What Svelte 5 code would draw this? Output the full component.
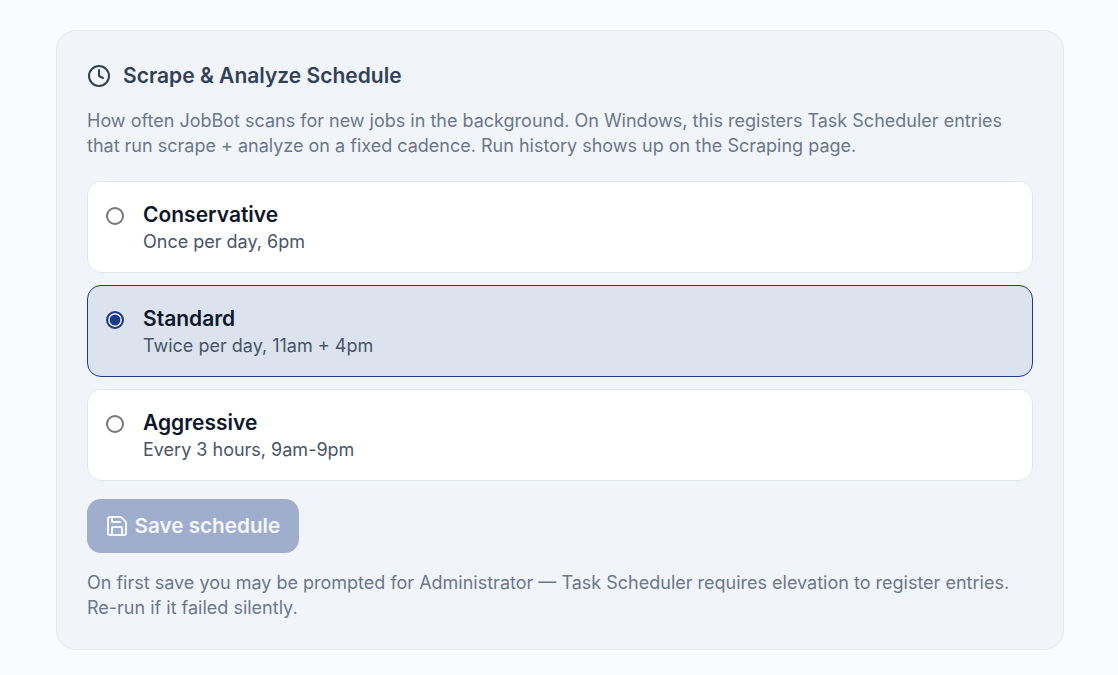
<script>
  const options = [
    { name: 'Conservative', detail: 'Once per day, 6pm' },
    { name: 'Standard', detail: 'Twice per day, 11am + 4pm' },
    { name: 'Aggressive', detail: 'Every 3 hours, 9am-9pm' }
  ];
  let selected = $state('Standard');
</script>

<main class="page">
  <section class="card">
    <h2 class="title">
      <svg class="clock" viewBox="0 0 24 24" fill="none" stroke="currentColor" stroke-width="2" stroke-linecap="round" stroke-linejoin="round">
        <circle cx="12" cy="12" r="10"></circle>
        <path d="M12 6v6l4 2"></path>
      </svg>
      Scrape &amp; Analyze Schedule
    </h2>
    <p class="note desc">How often JobBot scans for new jobs in the background. On Windows, this registers Task Scheduler entries that run scrape + analyze on a fixed cadence. Run history shows up on the Scraping page.</p>
    <div class="options">
      {#each options as o}
        <label class="option" class:active={selected === o.name}>
          <input type="radio" name="schedule" value={o.name} bind:group={selected} />
          <span class="text">
            <span class="name">{o.name}</span>
            <span class="detail">{o.detail}</span>
          </span>
        </label>
      {/each}
    </div>
    <button class="save" disabled>
      <svg class="disk" viewBox="0 0 24 24" fill="none" stroke="currentColor" stroke-width="2" stroke-linecap="round" stroke-linejoin="round">
        <path d="M15.2 3a2 2 0 0 1 1.4.6l3.8 3.8a2 2 0 0 1 .6 1.4V19a2 2 0 0 1-2 2H5a2 2 0 0 1-2-2V5a2 2 0 0 1 2-2z"></path>
        <path d="M17 21v-7a1 1 0 0 0-1-1H8a1 1 0 0 0-1 1v7"></path>
        <path d="M7 3v4a1 1 0 0 0 1 1h7"></path>
      </svg>
      <span class="save-label">Save schedule</span>
    </button>
    <p class="note foot">On first save you may be prompted for Administrator — Task Scheduler requires elevation to register entries. Re-run if it failed silently.</p>
  </section>
</main>

<style>
  :global(body) {
    margin: 0;
    background: #f9fbfd;
    font-family: Inter, "Noto Sans", sans-serif;
  }
  .page {
    padding: 30px 54px 25px 56px;
  }
  .card {
    box-sizing: border-box;
    height: 620px;
    padding: 30px;
    background: #f1f5f9;
    border: 1px solid #e5eaf0;
    border-radius: 20px;
  }
  .title {
    display: flex;
    align-items: center;
    gap: 12px;
    margin: 0;
    height: 30px;
    font-size: 21px;
    font-weight: 600;
    line-height: 30px;
    color: #334155;
  }
  .clock {
    width: 24px;
    height: 24px;
  }
  .note {
    margin: 0;
    font-size: 18px;
    line-height: 25px;
    color: #6b778c;
  }
  .desc {
    margin-top: 17px;
  }
  .options {
    display: flex;
    flex-direction: column;
    gap: 12px;
    margin-top: 23px;
  }
  .option {
    box-sizing: border-box;
    display: flex;
    align-items: flex-start;
    gap: 19px;
    height: 92px;
    padding: 19px 18px;
    background: #fff;
    border: 1px solid #e2e8f0;
    border-radius: 14px;
  }
  .option.active {
    background: #dde3ee;
    border-color: #1e3a8a;
  }
  input {
    appearance: none;
    box-sizing: border-box;
    flex: none;
    width: 18px;
    height: 18px;
    margin: 6px 0 0;
    background: #fff;
    border: 2px solid #767676;
    border-radius: 50%;
  }
  input:checked {
    background: #1e3a8a;
    border-color: #1e3a8a;
    box-shadow: inset 0 0 0 1.5px #fff;
  }
  .text {
    display: flex;
    flex-direction: column;
  }
  .name {
    font-size: 21px;
    font-weight: 600;
    line-height: 28px;
    color: #0f172a;
  }
  .detail {
    font-size: 18px;
    line-height: 25px;
    color: #475569;
  }
  .save {
    display: flex;
    align-items: center;
    gap: 5.5px;
    box-sizing: border-box;
    width: 212px;
    height: 54px;
    margin-top: 18px;
    padding: 0 18px;
    background: #a0aecd;
    border: 0;
    border-radius: 14px;
    font: 600 20.7px/24px Inter, sans-serif;
    color: #f4f6fb;
  }
  .disk {
    flex: none;
    width: 24px;
    height: 24px;
  }
  .foot {
    margin-top: 17px;
  }
</style>
